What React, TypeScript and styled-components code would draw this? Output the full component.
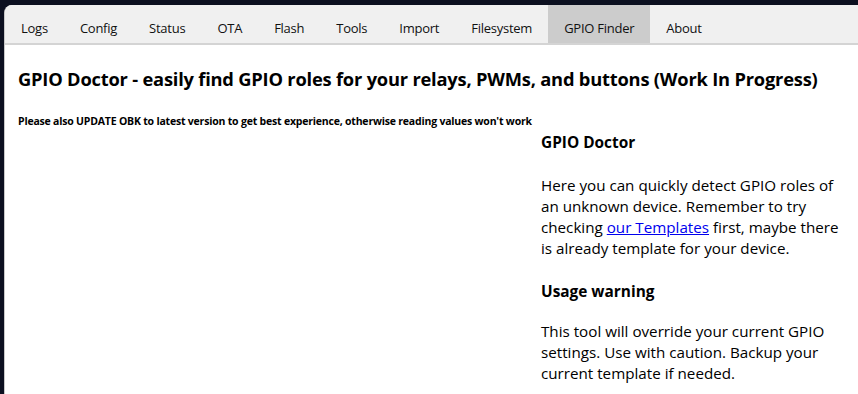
import React from "react";
import styled, { createGlobalStyle } from "styled-components";

const Global = createGlobalStyle`
  html, body { margin: 0; padding: 0; background: #0c1020; }
  body { font-family: "Open Sans", "Noto Sans", sans-serif; color: #000; }
  #root { min-height: 394px; }
`;

const Frame = styled.div`
  margin: 5px 0 0 4px;
  min-height: 389px;
  background: #fff;
  border-left: 1px solid #c8c8c8;
  border-top-left-radius: 8px;
  overflow: hidden;
`;

const TabBar = styled.nav`
  display: flex;
  background: #f0f0f0;
  border-bottom: 2px solid #d4d4d4;
  height: 38px;
  box-sizing: content-box;
`;

const Tab = styled.div<{ $active?: boolean }>`
  display: flex;
  align-items: center;
  padding: 7px 16px 0;
  font-size: 13px;
  letter-spacing: -0.25px;
  color: #111;
  background: ${(p) => (p.$active ? "#cccccc" : "transparent")};
  white-space: nowrap;
`;

const Main = styled.main`
  padding: 0 0 0 13px;
`;

const Title = styled.h2`
  margin: 21px 0 0;
  font-size: 18.3px;
  font-weight: 700;
  line-height: 26px;
  letter-spacing: -0.2px;
`;

const Notice = styled.h5`
  margin: 22px 0 0;
  font-size: 10.5px;
  font-weight: 700;
  line-height: 15px;
  letter-spacing: -0.2px;
`;

const Columns = styled.div`
  display: flex;
  padding-top: 2px;
`;

const LeftCol = styled.div`
  width: 523px;
`;

const RightCol = styled.aside`
  width: 310px;
  font-size: 15.2px;
  line-height: 21px;
`;

const SubTitle = styled.h3`
  margin: 1px 0 0;
  font-size: 15.4px;
  font-weight: 700;
  line-height: 21px;
`;

const Para = styled.p<{ $top?: number }>`
  margin: ${(p) => p.$top ?? 22}px 0 22px;
`;

const Link = styled.a`
  color: #0000ee;
  text-decoration: underline;
`;

const tabs = [
  "Logs",
  "Config",
  "Status",
  "OTA",
  "Flash",
  "Tools",
  "Import",
  "Filesystem",
  "GPIO Finder",
  "About",
];

export default function App() {
  return (
    <>
      <Global />
      <Frame>
        <TabBar>
          {tabs.map((t) => (
            <Tab key={t} $active={t === "GPIO Finder"}>
              {t}
            </Tab>
          ))}
        </TabBar>
        <Main>
          <Title>
            GPIO Doctor - easily find GPIO roles for your relays, PWMs, and buttons (Work In Progress)
          </Title>
          <Notice>
            Please also UPDATE OBK to latest version to get best experience, otherwise reading values won't work
          </Notice>
          <Columns>
            <LeftCol />
            <RightCol>
              <SubTitle>GPIO Doctor</SubTitle>
              <Para>
                Here you can quickly detect GPIO roles of an unknown device. Remember to try checking{" "}
                <Link href="#">our Templates</Link> first, maybe there is already template for your device.
              </Para>
              <SubTitle>Usage warning</SubTitle>
              <Para $top={19}>
                This tool will override your current GPIO settings. Use with caution. Backup your current
                template if needed.
              </Para>
            </RightCol>
          </Columns>
        </Main>
      </Frame>
    </>
  );
}
